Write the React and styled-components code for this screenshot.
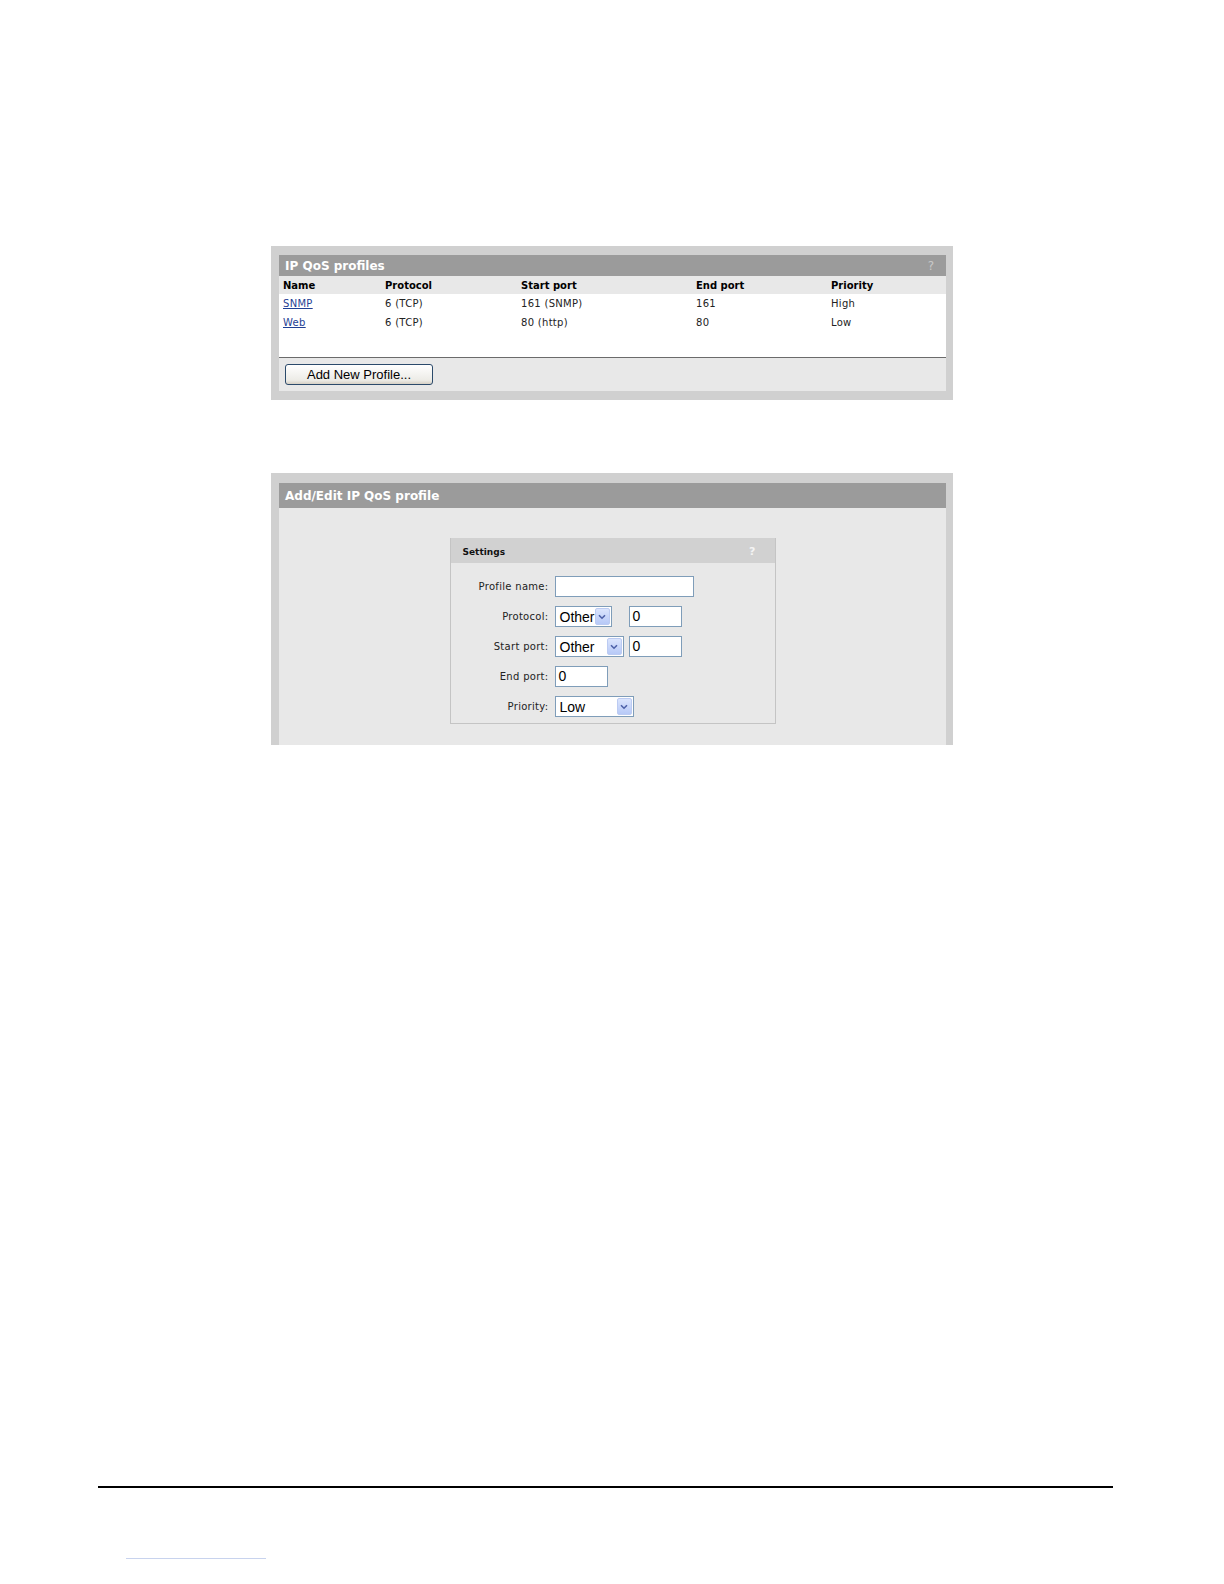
import React from 'react'
import styled, { createGlobalStyle } from 'styled-components'

const Global = createGlobalStyle`
  html, body { margin: 0; padding: 0; background: #fff; overflow: hidden; }
  body { font-family: "DejaVu Sans", Verdana, sans-serif; }
`

const Page = styled.div`
  width: 1224px;
  height: 1584px;
  display: flex;
  flex-direction: column;
  align-items: center;
  padding-top: 246px;
  box-sizing: border-box;
  overflow: hidden;
`

const Panel = styled.div`
  width: 682px;
  box-sizing: border-box;
  background: #d0d0d0;
  padding: ${(p) => p.pad};
  margin-bottom: ${(p) => p.gap || '0'};
`

const TitleBar = styled.div`
  height: ${(p) => p.h}px;
  background: #9b9b9b;
  display: flex;
  align-items: center;
  justify-content: space-between;
  padding: 0 12px 0 6px;
  color: #fff;
  font-weight: bold;
  font-size: 12px;
`

const Help = styled.span`
  color: ${(p) => p.color || '#c9c9c9'};
  font-weight: ${(p) => (p.bold ? 'bold' : 'normal')};
  font-size: ${(p) => p.size || 12}px;
`

const Table = styled.table`
  width: 100%;
  border-collapse: collapse;
  table-layout: fixed;
  font-size: 10px;
  background: #fff;
`

const HeadCell = styled.th`
  text-align: left;
  font-weight: bold;
  background: #e8e8e8;
  height: 18px;
  padding: 0 0 0 4px;
  color: #000;
`

const Cell = styled.td`
  height: 19px;
  padding: 0 0 0 4px;
  color: #222;
  letter-spacing: 0.3px;
`

const NameLink = styled.a`
  color: #1f3f94;
  text-decoration: underline;
`

const Filler = styled.div`
  height: 25px;
  background: #fff;
  border-bottom: 1px solid #6b6b6b;
`

const ButtonBar = styled.div`
  height: 33px;
  background: #e8e8e8;
  padding: 6px 0 0 6px;
  box-sizing: border-box;
`

const Button = styled.button`
  width: 148px;
  height: 21px;
  border: 1px solid #2b4a6b;
  border-radius: 3px;
  background: linear-gradient(#ffffff, #ecebe6 80%, #d6d0c5);
  font-family: "Liberation Sans", Arial, sans-serif;
  font-size: 13px;
  color: #000;
  padding: 0;
`

const Body = styled.div`
  background: #e8e8e8;
  height: 237px;
  padding-top: 30px;
  box-sizing: border-box;
  display: flex;
  justify-content: center;
`

const SettingsBox = styled.div`
  width: 326px;
  height: 186px;
  box-sizing: border-box;
  border: 1px solid #c4c4c4;
  border-top: none;
`

const SettingsTitle = styled.div`
  height: 25px;
  background: #d1d1d1;
  display: flex;
  align-items: center;
  justify-content: space-between;
  padding: 2px 19px 0 12px;
  box-sizing: border-box;
  font-size: 9px;
  font-weight: bold;
  color: #111;
`

const Form = styled.div`
  display: grid;
  grid-template-columns: 98px auto;
  column-gap: 6px;
  row-gap: 9px;
  padding-top: 13px;
  align-items: center;
`

const Label = styled.label`
  text-align: right;
  font-size: 10px;
  color: #222;
  letter-spacing: 0.3px;
`

const Fields = styled.div`
  display: flex;
  gap: ${(p) => p.gap || 0}px;
  align-items: center;
`

const TextBox = styled.div`
  width: ${(p) => p.w}px;
  height: 21px;
  box-sizing: border-box;
  border: 1px solid #7f9db9;
  background: #fff;
  font-family: "Liberation Sans", Arial, sans-serif;
  font-size: 14px;
  line-height: 19px;
  padding-left: 3px;
  color: #000;
`

const Select = styled.div`
  width: ${(p) => p.w}px;
  height: 21px;
  box-sizing: border-box;
  border: 1px solid #7f9db9;
  background: #fff;
  display: flex;
  align-items: center;
  justify-content: space-between;
  padding: 1px;
  font-family: "Liberation Sans", Arial, sans-serif;
  font-size: 14px;
  color: #000;
`

const SelectText = styled.span`
  padding-left: 3px;
`

const Arrow = styled.span`
  width: 15px;
  height: 17px;
  box-sizing: border-box;
  border: 1px solid #bccbf2;
  border-radius: 2px;
  background: linear-gradient(#dbe5fd, #b7c9f7);
  display: flex;
  align-items: center;
  justify-content: center;
`

const Footer = styled.div`
  margin-top: auto;
  width: 1015px;
  align-self: flex-start;
  margin-left: 98px;
  height: 96px;
  border-top: 2px solid #000;
`

const FooterLink = styled.div`
  width: 140px;
  margin: 70px 0 0 28px;
  border-top: 1px solid #c8d3ee;
`

const Chevron = () => (
  <svg width="8" height="6" viewBox="0 0 8 6">
    <path d="M1 1.2 L4 4.2 L7 1.2" fill="none" stroke="#4d61a8" strokeWidth="1.6" />
  </svg>
)

const FakeSelect = ({ w, value }) => (
  <Select w={w}>
    <SelectText>{value}</SelectText>
    <Arrow><Chevron /></Arrow>
  </Select>
)

const profiles = [
  { name: 'SNMP', protocol: '6 (TCP)', start: '161 (SNMP)', end: '161', priority: 'High' },
  { name: 'Web', protocol: '6 (TCP)', start: '80 (http)', end: '80', priority: 'Low' },
]

const App = () => {
  return (
    <Page>
      <Global />
      <Panel pad="9px 7px 9px 8px" gap="73px">
        <TitleBar h={21}>
          <span>IP QoS profiles</span>
          <Help>?</Help>
        </TitleBar>
        <Table>
          <colgroup>
            <col style={{ width: 102 }} />
            <col style={{ width: 136 }} />
            <col style={{ width: 175 }} />
            <col style={{ width: 135 }} />
            <col />
          </colgroup>
          <thead>
            <tr>
              <HeadCell>Name</HeadCell>
              <HeadCell>Protocol</HeadCell>
              <HeadCell>Start port</HeadCell>
              <HeadCell>End port</HeadCell>
              <HeadCell>Priority</HeadCell>
            </tr>
          </thead>
          <tbody>
            {profiles.map((p) => (
              <tr key={p.name}>
                <Cell><NameLink href="#">{p.name}</NameLink></Cell>
                <Cell>{p.protocol}</Cell>
                <Cell>{p.start}</Cell>
                <Cell>{p.end}</Cell>
                <Cell>{p.priority}</Cell>
              </tr>
            ))}
          </tbody>
        </Table>
        <Filler />
        <ButtonBar>
          <Button>Add New Profile...</Button>
        </ButtonBar>
      </Panel>

      <Panel pad="10px 7px 0 8px">
        <TitleBar h={25}>
          <span>Add/Edit IP QoS profile</span>
        </TitleBar>
        <Body>
          <SettingsBox>
            <SettingsTitle>
              <span>Settings</span>
              <Help color="#f4f4f4" size={11} bold>?</Help>
            </SettingsTitle>
            <Form>
              <Label>Profile name:</Label>
              <TextBox w={139} />

              <Label>Protocol:</Label>
              <Fields gap={17}>
                <FakeSelect w={57} value="Other" />
                <TextBox w={53}>0</TextBox>
              </Fields>

              <Label>Start port:</Label>
              <Fields gap={5}>
                <FakeSelect w={69} value="Other" />
                <TextBox w={53}>0</TextBox>
              </Fields>

              <Label>End port:</Label>
              <TextBox w={53}>0</TextBox>

              <Label>Priority:</Label>
              <FakeSelect w={79} value="Low" />
            </Form>
          </SettingsBox>
        </Body>
      </Panel>

      <Footer>
        <FooterLink />
      </Footer>
    </Page>
  )
}

export default App
